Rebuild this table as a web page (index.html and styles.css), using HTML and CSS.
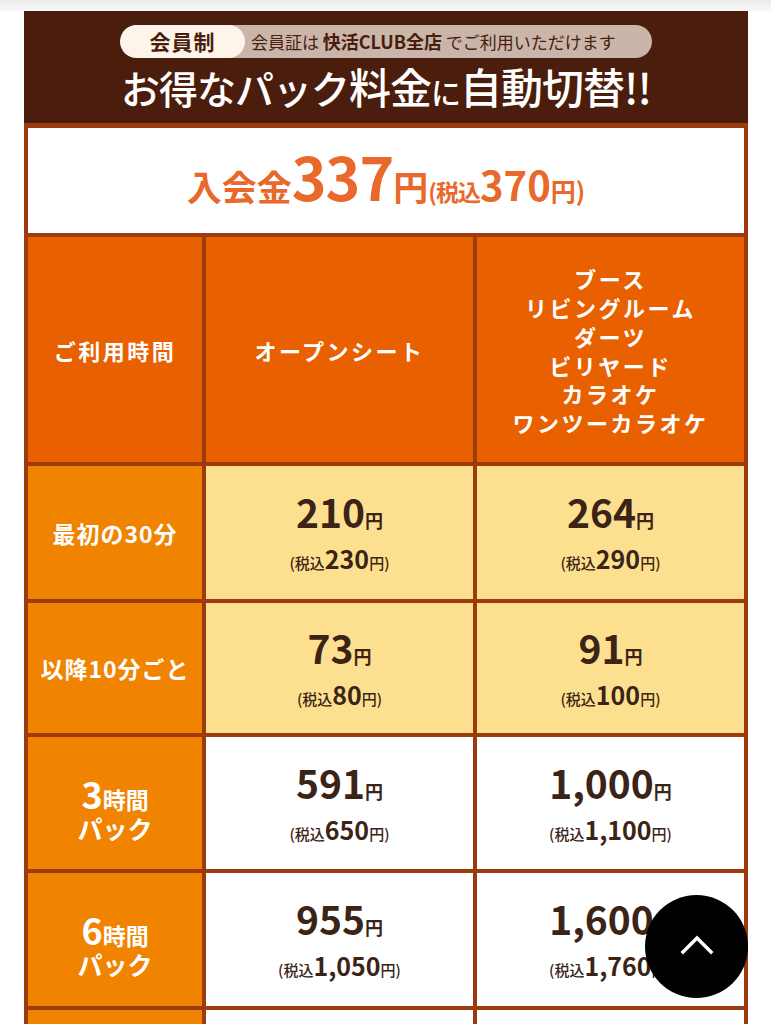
FILE: index.html
```html
<!DOCTYPE html>
<html lang="ja">
<head>
<meta charset="utf-8">
<link rel="stylesheet" href="styles.css">
</head>
<body>
<div class="topbar"></div>
<div class="wrap">
  <div class="head">
    <div class="pill">
      <span class="pill-l">会員制</span>
      <span class="pill-r">会員証は <b>快活CLUB全店</b> でご利用いただけます</span>
    </div>
    <div class="title"><span class="t1">お得なパック</span><span class="t2">料金</span><span class="t3">に</span><span class="t2">自動切替!!</span></div>
  </div>
  <div class="table">
    <div class="fee"><span class="f1">入会金</span><span class="f2">337</span><span class="f1">円</span><span class="f3">(税込</span><span class="f4">370</span><span class="f5">円)</span></div>

    <div class="th">ご利用時間</div>
    <div class="th">オープンシート</div>
    <div class="th multi">ブース<br>リビングルーム<br>ダーツ<br>ビリヤード<br>カラオケ<br>ワンツーカラオケ</div>

    <div class="rh r1">最初の30分</div>
    <div class="cell yel r1"><div class="p"><span class="n">210</span><span class="y">円</span></div><div class="s"><span class="sm">(税込</span><span class="sn">230</span><span class="sm">円)</span></div></div>
    <div class="cell yel r1"><div class="p"><span class="n">264</span><span class="y">円</span></div><div class="s"><span class="sm">(税込</span><span class="sn">290</span><span class="sm">円)</span></div></div>

    <div class="rh r2">以降10分ごと</div>
    <div class="cell yel r2"><div class="p"><span class="n">73</span><span class="y">円</span></div><div class="s"><span class="sm">(税込</span><span class="sn">80</span><span class="sm">円)</span></div></div>
    <div class="cell yel r2"><div class="p"><span class="n">91</span><span class="y">円</span></div><div class="s"><span class="sm">(税込</span><span class="sn">100</span><span class="sm">円)</span></div></div>

    <div class="rh pack r3"><div class="pl1"><span class="pn">3</span><span class="pj">時間</span></div><div class="pk">パック</div></div>
    <div class="cell r3"><div class="p"><span class="n">591</span><span class="y">円</span></div><div class="s"><span class="sm">(税込</span><span class="sn">650</span><span class="sm">円)</span></div></div>
    <div class="cell r3"><div class="p"><span class="n">1,000</span><span class="y">円</span></div><div class="s"><span class="sm">(税込</span><span class="sn">1,100</span><span class="sm">円)</span></div></div>

    <div class="rh pack r4"><div class="pl1"><span class="pn">6</span><span class="pj">時間</span></div><div class="pk">パック</div></div>
    <div class="cell r4"><div class="p"><span class="n">955</span><span class="y">円</span></div><div class="s"><span class="sm">(税込</span><span class="sn">1,050</span><span class="sm">円)</span></div></div>
    <div class="cell r4"><div class="p"><span class="n">1,600</span><span class="y">円</span></div><div class="s"><span class="sm">(税込</span><span class="sn">1,760</span><span class="sm">円)</span></div></div>

    <div class="rh pack r4"><div class="pl1"><span class="pn">9</span><span class="pj">時間</span></div><div class="pk">パック</div></div>
    <div class="cell r4"><div class="p"><span class="n">1,318</span><span class="y">円</span></div><div class="s"><span class="sm">(税込</span><span class="sn">1,450</span><span class="sm">円)</span></div></div>
    <div class="cell r4"><div class="p"><span class="n">2,182</span><span class="y">円</span></div><div class="s"><span class="sm">(税込</span><span class="sn">2,400</span><span class="sm">円)</span></div></div>
  </div>
</div>
<a class="totop" href="#" aria-label="ページトップへ">
  <svg width="40" height="40" viewBox="0 0 40 40"><path d="M6 27 L20 13 L34 27" fill="none" stroke="#fff" stroke-width="3.5" stroke-linecap="square"/></svg>
</a>
</body>
</html>
```
FILE: styles.css
```css
* { box-sizing: border-box; }
html, body { margin: 0; padding: 0; background: #fff; }
body {
  font-family: "Noto Sans CJK JP", "Noto Sans", sans-serif;
  width: 771px;
}
.topbar {
  height: 11px;
  background: linear-gradient(#ececec, #f7f7f7);
}
.wrap {
  width: 724px;
  margin-left: 24px;
}
.head {
  background: #4b1d0c;
  height: 112px;
  padding-top: 14px;
  display: flex;
  flex-direction: column;
  align-items: center;
}
.pill {
  display: flex;
  height: 33px;
  border-radius: 17px;
  overflow: hidden;
  background: #c9b5a9;
  width: 532px;
}
.pill-l {
  background: #fdf4ea;
  color: #4b1d0c;
  font-weight: 700;
  font-size: 21px;
  line-height: 33px;
  width: 125px;
  text-align: center;
  border-radius: 17px;
  letter-spacing: 1px;
  flex: none;
}
.pill-r {
  color: #4b1d0c;
  font-size: 17px;
  line-height: 33px;
  padding-left: 6px;
  letter-spacing: 0;
  white-space: nowrap;
}
.pill-r b { font-size: 18px; font-weight: 700; }
.title {
  color: #fff;
  margin-top: 4px;
  line-height: 48px;
  white-space: nowrap;
  letter-spacing: -1px;
}
.t1 { font-size: 39px; font-weight: 500; }
.t2 { font-size: 42px; font-weight: 500; }
.t3 { font-size: 30px; font-weight: 500; }

.table {
  display: grid;
  grid-template-columns: 174px 267px 267px;
  gap: 4px;
  padding: 5px 4px 4px;
  background: #9b3b0e;
}
.fee {
  grid-column: 1 / -1;
  background: #fff;
  height: 105px;
  display: flex;
  align-items: baseline;
  justify-content: center;
  padding-top: 5px;
  color: #e8692b;
  font-weight: 700;
  white-space: nowrap;
}
.f1 { font-size: 35px; }
.f2 { font-size: 59px; letter-spacing: -1px; }
.f3 { font-size: 23px; letter-spacing: -1px; }
.f4 { font-size: 40px; }
.f5 { font-size: 25px; }

.th {
  background: #e86000;
  height: 225px;
  color: #fff;
  font-weight: 700;
  font-size: 22px;
  display: flex;
  align-items: center;
  justify-content: center;
  text-align: center;
  letter-spacing: 2.5px;
}
.th.multi { line-height: 28.8px; padding-top: 2px; }
.rh {
  background: #f08300;
  color: #fff;
  font-weight: 700;
  font-size: 23px;
  letter-spacing: 1px;
  display: flex;
  flex-direction: column;
  align-items: center;
  justify-content: center;
  text-align: center;
}
.r1 { height: 133px; }
.r2 { height: 130px; }
.r3 { height: 132px; }
.r4 { height: 133px; }
.pack { padding-top: 12px; letter-spacing: 0; }
.pl1 { line-height: 32px; }
.pn { font-size: 36px; }
.pj { font-size: 23px; }
.pk { font-size: 25px; line-height: 27px; }

.cell {
  background: #fff;
  color: #3b2416;
  display: flex;
  flex-direction: column;
  align-items: center;
  justify-content: center;
  font-weight: 700;
  padding-top: 4px;
}
.cell.yel { background: #fde08f; }
.p { line-height: 42px; white-space: nowrap; }
.n { font-size: 39px; }
.y { font-size: 18px; }
.s { line-height: 32px; white-space: nowrap; }
.sm { font-size: 15px; font-weight: 500; }
.sn { font-size: 25px; }

.totop {
  position: fixed;
  left: 645px;
  top: 895px;
  width: 103px;
  height: 103px;
  border-radius: 50%;
  background: #000;
  display: flex;
  align-items: center;
  justify-content: center;
}
.totop svg { margin-top: -4px; }
```
